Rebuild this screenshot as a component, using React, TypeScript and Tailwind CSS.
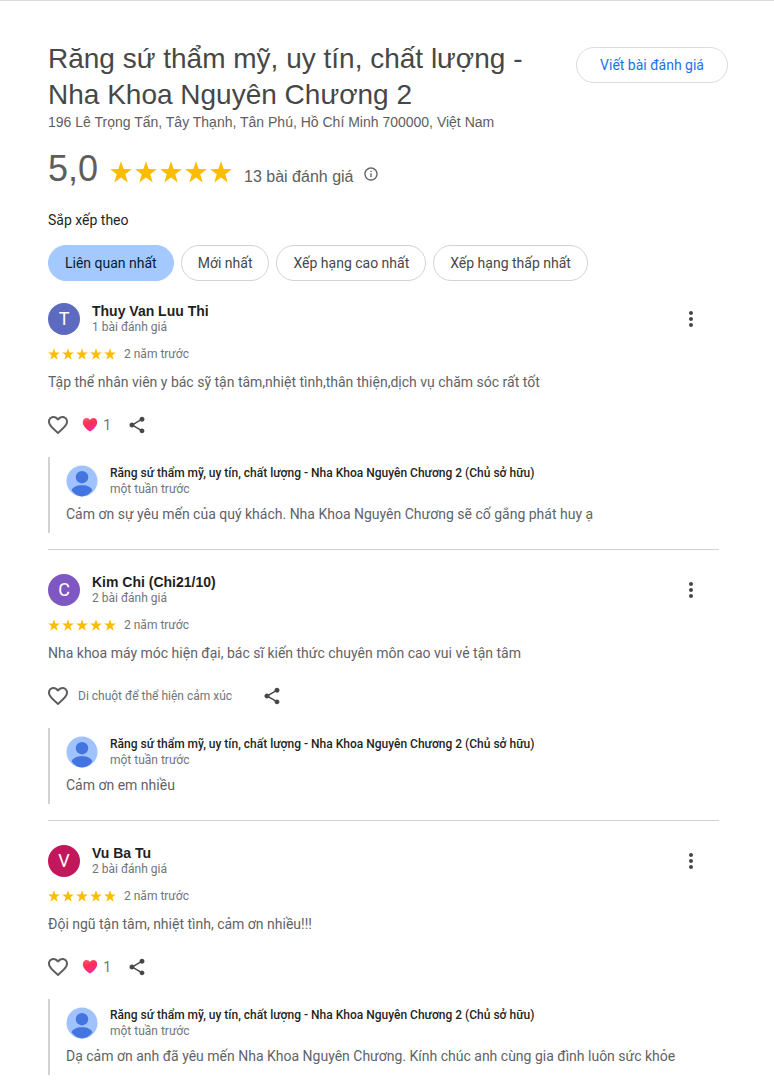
import React from 'react';
import clsx from 'clsx';

interface Review {
  id: string;
  name: string;
  initial: string;
  avatarClass: string;
  reviewCount: string;
  time: string;
  text: string;
  likes: number;
  reply: string;
}

const PLACE_NAME = 'Răng sứ thẩm mỹ, uy tín, chất lượng - Nha Khoa Nguyên Chương 2';

const SORT_OPTIONS = ['Liên quan nhất', 'Mới nhất', 'Xếp hạng cao nhất', 'Xếp hạng thấp nhất'];

const REVIEWS: Review[] = [
  {
    id: 'thuy-van',
    name: 'Thuy Van Luu Thi',
    initial: 'T',
    avatarClass: 'bg-[#5c6bc0]',
    reviewCount: '1 bài đánh giá',
    time: '2 năm trước',
    text: 'Tập thể nhân viên y bác sỹ tận tâm,nhiệt tình,thân thiện,dịch vụ chăm sóc rất tốt',
    likes: 1,
    reply: 'Cảm ơn sự yêu mến của quý khách. Nha Khoa Nguyên Chương sẽ cố gắng phát huy ạ',
  },
  {
    id: 'kim-chi',
    name: 'Kim Chi (Chi21/10)',
    initial: 'C',
    avatarClass: 'bg-[#7e57c2]',
    reviewCount: '2 bài đánh giá',
    time: '2 năm trước',
    text: 'Nha khoa máy móc hiện đại, bác sĩ kiến thức chuyên môn cao vui vẻ tận tâm',
    likes: 0,
    reply: 'Cảm ơn em nhiều',
  },
  {
    id: 'vu-ba-tu',
    name: 'Vu Ba Tu',
    initial: 'V',
    avatarClass: 'bg-[#c2185b]',
    reviewCount: '2 bài đánh giá',
    time: '2 năm trước',
    text: 'Đội ngũ tận tâm, nhiệt tình, cảm ơn nhiều!!!',
    likes: 1,
    reply: 'Dạ cảm ơn anh đã yêu mến Nha Khoa Nguyên Chương. Kính chúc anh cùng gia đình luôn sức khỏe',
  },
];

const Stars: React.FC<{ size: 'sm' | 'lg' }> = ({ size }) => (
  <div className={clsx('flex', size === 'lg' ? 'gap-[3px]' : 'gap-[2px]')} role="img" aria-label="5 / 5">
    {[1, 2, 3, 4, 5].map((n) => (
      <svg key={n} viewBox="0 0 22 22" className={size === 'lg' ? 'size-[22px]' : 'size-3'} fill="#fbbc04">
        <path d="M11 0.300l2.700 7.800 8.100.1-6.500 5 2.400 8.200L11 16.600l-6.700 4.800 2.400-8.200-6.500-5 8.100-.1z" />
      </svg>
    ))}
  </div>
);

const InfoIcon = () => (
  <svg viewBox="0 0 24 24" className="size-4" fill="#5f6368">
    <path d="M11 7h2v2h-2zm0 4h2v6h-2zm1-9C6.48 2 2 6.48 2 12s4.48 10 10 10 10-4.48 10-10S17.52 2 12 2zm0 18c-4.41 0-8-3.59-8-8s3.59-8 8-8 8 3.59 8 8-3.59 8-8 8z" />
  </svg>
);

const MoreIcon = () => (
  <svg viewBox="0 0 24 24" className="size-6" fill="#474747">
    <path d="M12 8c1.1 0 2-.9 2-2s-.9-2-2-2-2 .9-2 2 .9 2 2 2zm0 2c-1.1 0-2 .9-2 2s.9 2 2 2 2-.9 2-2-.9-2-2-2zm0 6c-1.1 0-2 .9-2 2s.9 2 2 2 2-.9 2-2-.9-2-2-2z" />
  </svg>
);

const HeartOutline = () => (
  <svg viewBox="2 2 20 20" className="size-5" fill="#5e5e5e">
    <path d="M16.5 3c-1.74 0-3.41.81-4.5 2.09C10.91 3.81 9.24 3 7.5 3 4.42 3 2 5.42 2 8.5c0 3.78 3.4 6.86 8.55 11.54L12 21.35l1.45-1.32C18.6 15.36 22 12.28 22 8.5 22 5.42 19.58 3 16.5 3zm-4.4 15.55l-.1.1-.1-.1C7.14 14.24 4 11.39 4 8.5 4 6.5 5.5 5 7.5 5c1.54 0 3.04.99 3.57 2.36h1.87C13.46 5.99 14.96 5 16.5 5c2 0 3.5 1.5 3.5 3.5 0 2.89-3.14 5.74-7.9 10.05z" />
  </svg>
);

const HeartFilled = () => (
  <svg viewBox="0 0 16 16" className="size-4">
    <defs>
      <linearGradient id="heart" x1="0" y1="0" x2="0.5" y2="1">
        <stop offset="0" stopColor="#ff5a6e" />
        <stop offset="0.5" stopColor="#fb2f52" />
        <stop offset="1" stopColor="#f52aa5" />
      </linearGradient>
    </defs>
    <path
      d="M8 14.6C4.6 12.1.8 9.3.8 5.2.8 2.7 2.400 1 4.500 1 6 1 7.300 1.800 8 3 8.700 1.800 10 1 11.500 1c2.100 0 3.700 1.700 3.700 4.200 0 4.100-3.800 6.900-7.200 9.400z"
      fill="url(#heart)"
    />
  </svg>
);

const ShareIcon = () => (
  <svg viewBox="0 0 24 24" className="size-5" fill="#474747">
    <path d="M18 16.08c-.76 0-1.44.3-1.96.77L8.91 12.7c.05-.23.09-.46.09-.7s-.04-.47-.09-.7l7.05-4.11c.54.5 1.25.81 2.04.81 1.66 0 3-1.34 3-3s-1.34-3-3-3-3 1.34-3 3c0 .24.04.47.09.7L8.04 9.81C7.5 9.31 6.79 9 6 9c-1.66 0-3 1.34-3 3s1.34 3 3 3c.79 0 1.5-.31 2.04-.81l7.12 4.16c-.05.21-.08.43-.08.65 0 1.61 1.31 2.92 2.92 2.92s2.92-1.31 2.92-2.92-1.31-2.92-2.92-2.92z" />
  </svg>
);

const OwnerAvatar = () => (
  <svg viewBox="0 0 32 32" className="size-8 shrink-0">
    <circle cx="16" cy="16" r="15.5" fill="#a0c3ff" />
    <circle cx="16" cy="12.2" r="6.2" fill="#4374e0" />
    <path d="M16 20.200c-5.400 0-9.800 2-10.300 5.400C8.200 29 11.800 31.400 16 31.400s7.800-2.400 10.300-5.800c-.5-3.400-4.900-5.400-10.300-5.400z" fill="#4374e0" />
  </svg>
);

const ReviewItem: React.FC<{ review: Review }> = ({ review }) => {
  const { name, initial, avatarClass, reviewCount, time, text, likes, reply } = review;

  return (
    <article className="mb-6 border-b border-[#d2d2d2] pb-4 last:mb-0 last:border-b-0">
      <div className="flex items-center">
        <div className={clsx('flex size-8 items-center justify-center rounded-full text-lg text-white', avatarClass)}>
          {initial}
        </div>
        <div className="ml-3 flex-1">
          <a href="#" className="block font-['Liberation_Sans',sans-serif] text-sm leading-4 font-bold text-[#1f1f1f]">
            {name}
          </a>
          <div className="text-xs leading-4 text-[#70757a]">{reviewCount}</div>
        </div>
        <button type="button" aria-label="Thêm" className="mr-4">
          <MoreIcon />
        </button>
      </div>

      <div className="mt-[11px] flex items-center gap-2">
        <Stars size="sm" />
        <span className="text-xs leading-4 text-[#70757a]">{time}</span>
      </div>
      <p className="mt-[10px] text-sm leading-5 text-[#5f6368]">{text}</p>

      <div className="mt-[23px] flex h-5 items-center text-[#70757a]">
        <button type="button" aria-label="Thích">
          <HeartOutline />
        </button>
        {likes > 0 ? (
          <button type="button" className="ml-2 flex w-[43px] items-center justify-end gap-[5px] pr-2 text-sm">
            <HeartFilled />
            {likes}
          </button>
        ) : (
          <span className="mr-[22px] ml-[10px] text-xs">Di chuột để thể hiện cảm xúc</span>
        )}
        <button type="button" aria-label="Chia sẻ" className="ml-2">
          <ShareIcon />
        </button>
      </div>

      <div className="mt-[22px] border-l-2 border-[#d2d2d2] pt-2 pl-4">
        <div className="flex items-center gap-3">
          <OwnerAvatar />
          <div className="text-xs leading-4">
            <div className="font-medium text-[#1f1f1f]">{PLACE_NAME} (Chủ sở hữu)</div>
            <div className="text-[#70757a]">một tuần trước</div>
          </div>
        </div>
        <p className="mt-[7px] pb-[9px] text-sm leading-5 text-[#5f6368]">{reply}</p>
      </div>
    </article>
  );
};

const App = () => {
  const [sort, setSort] = React.useState(SORT_OPTIONS[0]);

  return (
    <main className="border-t border-[#dadce0] bg-white px-12 pt-10 font-[Roboto,sans-serif]">
      <header className="font-['Liberation_Sans',sans-serif] text-[#5e5e5e]">
        <div className="-mr-[2px] flex items-start justify-between gap-6">
          <h1 className="text-[28px] leading-9 text-[#474747]">{PLACE_NAME}</h1>
          <button
            type="button"
            className="mt-[6px] h-9 shrink-0 rounded-full border border-[#dadce0] px-[23px] font-[Roboto,sans-serif] text-sm text-[#1a73e8]"
          >
            Viết bài đánh giá
          </button>
        </div>
        <div className="text-sm leading-[18px]">196 Lê Trọng Tấn, Tây Thạnh, Tân Phú, Hồ Chí Minh 700000, Việt Nam</div>
        <div className="mt-4 flex h-11 items-center">
          <span className="text-4xl">5,0</span>
          <div className="mt-[5px] ml-3">
            <Stars size="lg" />
          </div>
          <span className="mt-4 ml-3 text-base">13 bài đánh giá</span>
          <button type="button" aria-label="Thông tin" className="mt-[10px] ml-[10px]">
            <InfoIcon />
          </button>
        </div>
      </header>

      <div className="mt-[19px] text-sm leading-5 text-[#1f1f1f]" id="sort-label">Sắp xếp theo</div>
      <div className="mt-[15px] flex flex-wrap gap-[7px]" role="group" aria-labelledby="sort-label">
        {SORT_OPTIONS.map((option) => (
          <button
            key={option}
            type="button"
            aria-pressed={sort === option}
            onClick={() => setSort(option)}
            className={clsx(
              'h-9 rounded-full border px-4 text-sm',
              sort === option ? 'border-[#a3c9ff] bg-[#a3c9ff] text-[#001d35]' : 'border-[#d2d2d2] text-[#474747]'
            )}
          >
            {option}
          </button>
        ))}
      </div>

      <section className="mt-[22px] mr-[7px]">
        {REVIEWS.map((review) => (
          <ReviewItem key={review.id} review={review} />
        ))}
      </section>
    </main>
  );
};

export default App;
